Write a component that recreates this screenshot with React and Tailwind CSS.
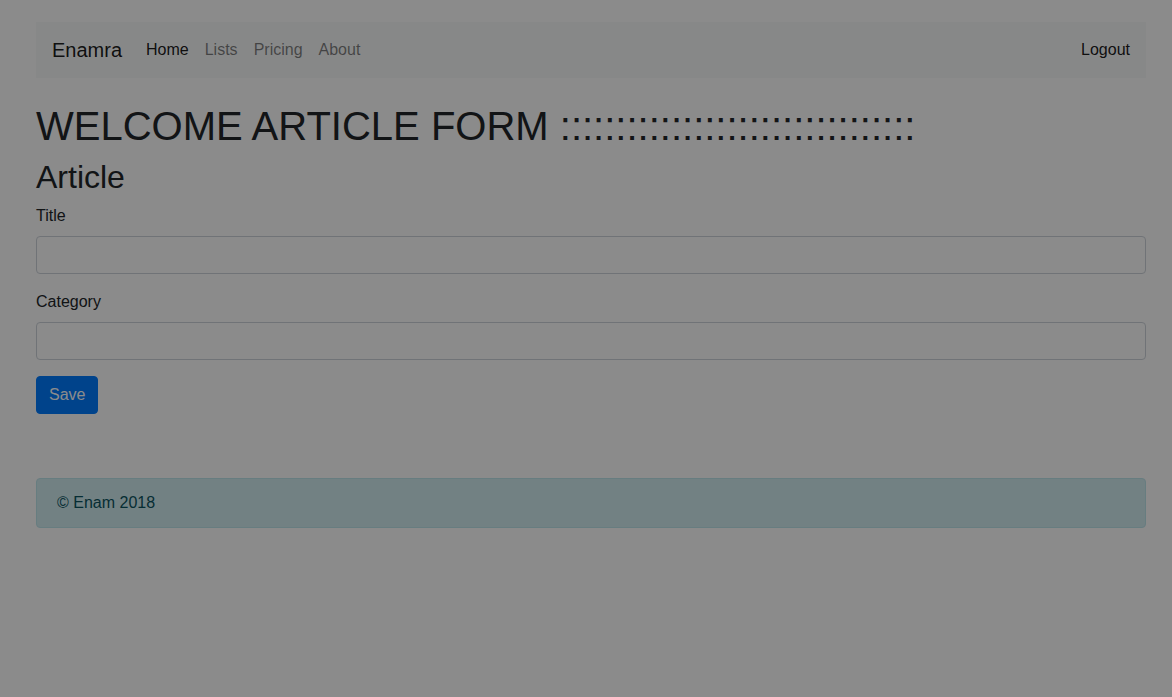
import React from "react";

const font = { fontFamily: '"Liberation Sans", Arial, sans-serif' };

export default function App() {
  const colons = ":".repeat(32);

  return (
    <div className="min-h-[697px] bg-white text-[#212529]" style={font}>
      <div className="pl-[36px] pr-[26px] pt-[22px]">
        <nav className="h-[56px] bg-[#f8f9fa] flex items-center px-4">
          <a className="text-[20px] leading-[30px] mr-4 text-black/90">Enamra</a>
          <ul className="flex items-center">
            <li className="px-2 text-[16px] leading-6 text-black/90">Home</li>
            <li className="px-2 text-[16px] leading-6 text-black/50">Lists</li>
            <li className="px-2 text-[16px] leading-6 text-black/50">Pricing</li>
            <li className="px-2 text-[16px] leading-6 text-black/50">About</li>
          </ul>
          <div className="ml-auto text-[16px] leading-6 text-black/90">Logout</div>
        </nav>

        <h1 className="mt-[24px] mb-2 text-[40px] leading-[48px] font-normal">
          WELCOME ARTICLE FORM {colons}
        </h1>
        <h2 className="mb-2 text-[32px] leading-[38.4px] font-normal">Article</h2>

        <form onSubmit={e => e.preventDefault()}>
          <div className="mb-4">
            <label className="block mb-2 text-[16px] leading-6">Title</label>
            <input
              type="text"
              className="block w-full h-[38px] px-3 border border-[#ced4da] rounded bg-white"
            />
          </div>
          <div className="mb-4">
            <label className="block mb-2 text-[16px] leading-6">Category</label>
            <input
              type="text"
              className="block w-full h-[38px] px-3 border border-[#ced4da] rounded bg-white"
            />
          </div>
          <button
            type="submit"
            className="h-[38px] px-3 rounded bg-[#007bff] border border-[#007bff] text-white text-[16px] leading-6"
          >
            Save
          </button>
        </form>

        <footer className="mt-[64px] px-5 py-3 bg-[#d1ecf1] border border-[#bee5eb] rounded text-[#0c5460] text-[16px] leading-6">
          © Enam 2018
        </footer>
      </div>

      {/* modal backdrop */}
      <div className="fixed inset-0 bg-[rgba(0,0,0,0.455)]" />
    </div>
  );
}
